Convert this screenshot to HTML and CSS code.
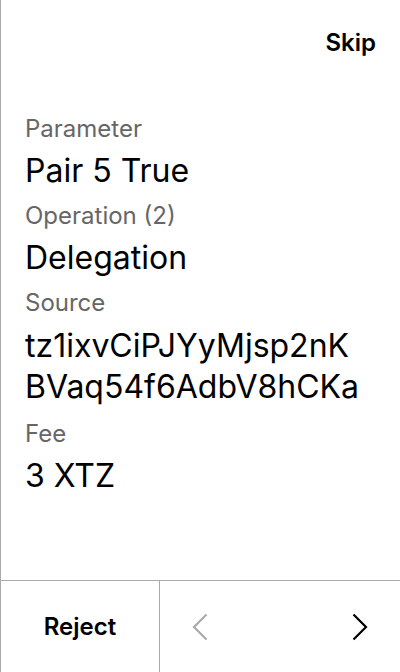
FILE: index.html
```html
<!DOCTYPE html>
<html lang="en">
<head>
<meta charset="utf-8">
<title>Review operation</title>
<link rel="stylesheet" href="styles.css">
</head>
<body>
<div class="screen">
  <header class="top">
    <button class="skip">Skip</button>
  </header>
  <main class="fields">
    <div class="field">
      <div class="label">Parameter</div>
      <div class="value">Pair 5 True</div>
    </div>
    <div class="field">
      <div class="label">Operation (2)</div>
      <div class="value">Delegation</div>
    </div>
    <div class="field">
      <div class="label">Source</div>
      <div class="value multi">tz1ixvCiPJYyMjsp2nK<br>BVaq54f6AdbV8hCKa</div>
    </div>
    <div class="field">
      <div class="label">Fee</div>
      <div class="value">3 XTZ</div>
    </div>
  </main>
  <footer class="bar">
    <button class="reject">Reject</button>
    <div class="nav">
      <button class="arrow disabled" aria-label="Previous">
        <svg width="16" height="28" viewBox="0 0 16 28"><path d="M14.5 1.5 L2 14 L14.5 26.5" fill="none" stroke="currentColor" stroke-width="2.2"/></svg>
      </button>
      <button class="arrow" aria-label="Next">
        <svg width="16" height="28" viewBox="0 0 16 28"><path d="M1.5 1.5 L14 14 L1.5 26.5" fill="none" stroke="currentColor" stroke-width="2.2"/></svg>
      </button>
    </div>
  </footer>
</div>
</body>
</html>
```

FILE: styles.css
```css
* { box-sizing: border-box; }
html, body { margin: 0; padding: 0; background: #fff; }
body { font-family: Inter, "Noto Sans", sans-serif; color: #000; }
button { font: inherit; background: none; border: 0; padding: 0; color: inherit; cursor: pointer; }

.screen {
  width: 400px;
  height: 672px;
  border-left: 1px solid #aaaaaa;
  display: flex;
  flex-direction: column;
}

.top {
  display: flex;
  justify-content: flex-end;
  padding: 27px 24px 0 0;
  height: 113px;
}
.skip { font-size: 24px; font-weight: 600; line-height: 32px; height: 32px; }

.fields {
  flex: 1;
  padding: 0 24px;
  display: flex;
  flex-direction: column;
  gap: 9px;
}
.label { font-size: 24px; line-height: 32px; color: #666666; margin-bottom: 6px; }
.value { font-size: 32px; line-height: 40px; color: #000; }
.value.multi { line-height: 41px; padding-bottom: 2px; }

.bar {
  height: 92px;
  border-top: 1px solid #aaaaaa;
  display: flex;
}
.reject {
  width: 159px;
  font-size: 24px;
  font-weight: 600;
  border-right: 1px solid #aaaaaa;
}
.nav {
  flex: 1;
  display: flex;
  justify-content: space-between;
}
.arrow { width: 80px; display: flex; align-items: center; justify-content: center; color: #000; }
.arrow.disabled { color: #aaaaaa; }
```
